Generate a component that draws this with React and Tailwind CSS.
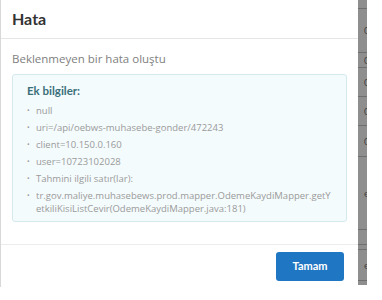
import React from "react";

const details = [
  "null",
  "uri=/api/oebws-muhasebe-gonder/472243",
  "client=10.150.0.160",
  "user=10723102028",
  "Tahmini ilgili satır(lar):",
];

// rows of the table that peeks out behind the dialog
const stripRows = [
  { h: 9, t: "" },
  { h: 44, t: "0" },
  { h: 15, t: "0" },
  { h: 29, t: "0" },
  { h: 29, t: "0" },
  { h: 31, t: "0" },
  { h: 73, t: "em" },
  { h: 15, t: "" },
  { h: 5, t: "" },
  { h: 31, t: "em" },
];

const Bullet = () => (
  <span className="w-[9px] shrink-0 text-[7px] leading-[13px] text-[#9a9a9a]">•</span>
);

const ErrorDialog = () => {
  return (
    <div className="w-[358px] h-[287px] flex flex-col bg-white border-l border-[#d8d8d8]">
      <div className="h-[39px] shrink-0 px-[11px] flex items-center border-b border-[#e6e6e6]">
        <h2 className="text-[16px] font-bold text-[#333] leading-none">Hata</h2>
      </div>

      <div className="flex-1 px-[11px] pt-[11px]">
        <p className="font-['Open_Sans',sans-serif] text-[11.5px] leading-[18px] text-[#808080]">
          Beklenmeyen bir hata oluştu
        </p>
        <div className="mt-[6px] h-[148px] overflow-hidden bg-[#f4fbfd] border border-[#d3e9ee] rounded-[3px] px-[14px] pt-[9px]">
          <div className="text-[11.5px] font-bold text-[#3b6f7a] leading-[14px]">
            Ek bilgiler:
          </div>
          <ul className="mt-[4px] font-['Open_Sans',sans-serif] text-[9.5px] leading-[13px] text-[#9a9a9a]">
            {details.map((d) => (
              <li key={d} className="flex py-[2px]">
                <Bullet />
                <span>{d}</span>
              </li>
            ))}
            <li className="flex py-[2px]">
              <Bullet />
              <span>
                tr.gov.maliye.muhasebews.prod.mapper.OdemeKaydiMapper.getY
                <br />
                etkiliKisiListCevir(OdemeKaydiMapper.java:181)
              </span>
            </li>
            <li className="flex py-[2px]">
              <Bullet />
              <span></span>
            </li>
          </ul>
        </div>
      </div>

      <div className="h-[43px] shrink-0 border-t border-[#ececec] flex items-start justify-end pr-[14px] pt-[7px]">
        <button className="w-[68px] h-[29px] rounded-[3px] bg-[#1f76c2] text-white text-[11px] font-bold">
          Tamam
        </button>
      </div>
    </div>
  );
};

const App = () => {
  return (
    <div className="w-[382px] h-[300px] flex bg-white font-['Lato',sans-serif] overflow-hidden">
      <ErrorDialog />
      <div className="w-[9px] h-[285px] bg-[#8e8e8e] flex flex-col overflow-hidden">
        {stripRows.map((r, i) => (
          <div
            key={i}
            style={{ height: r.h }}
            className="shrink-0 border-b border-[#6f6f6f] flex items-center pl-[6px] text-[10px] text-[#444] whitespace-nowrap"
          >
            {r.t}
          </div>
        ))}
      </div>
    </div>
  );
};

export default App;
